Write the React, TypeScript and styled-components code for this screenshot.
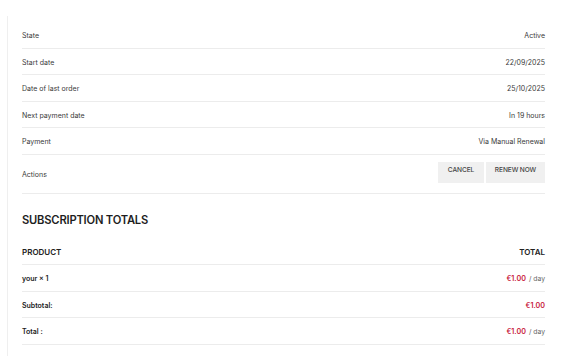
import React from 'react';
import styled, { createGlobalStyle } from 'styled-components';

const GlobalStyle = createGlobalStyle`
  html, body {
    margin: 0;
    padding: 0;
    background: #ffffff;
  }
  body {
    font-family: Inter, "Noto Sans", "Liberation Sans", sans-serif;
    color: #2b2b2b;
  }
`;

const Page = styled.div`
  width: 564px;
  height: 356px;
  box-sizing: border-box;
  padding: 16px 0 0 7px;
  overflow: hidden;
`;

const Panel = styled.div`
  border-left: 1px solid #efefef;
  height: 100%;
  box-sizing: border-box;
  padding: 6px 19px 0 14px;
`;

const Table = styled.div`
  display: flex;
  flex-direction: column;
`;

const Row = styled.div<{ $tall?: boolean }>`
  display: flex;
  align-items: center;
  justify-content: space-between;
  box-sizing: border-box;
  height: ${(p) => (p.$tall ? '39px' : '26.5px')};
  padding-top: 2px;
  border-bottom: 1px solid #ececec;
  font-size: 7px;
  color: #3a3a3a;
`;

const Label = styled.span<{ $strong?: boolean }>`
  font-weight: ${(p) => (p.$strong ? 600 : 400)};
  color: ${(p) => (p.$strong ? '#222' : '#3a3a3a')};
`;

const Value = styled.span`
  color: #3a3a3a;
`;

const Buttons = styled.div`
  display: flex;
  gap: 2px;
  align-self: flex-start;
  margin-top: 5px;
`;

const Button = styled.button<{ $w: number }>`
  width: ${(p) => p.$w}px;
  height: 21px;
  border: none;
  background: #f0f0f0;
  color: #444;
  font-family: inherit;
  font-size: 6.6px;
  font-weight: 500;
  text-transform: uppercase;
  padding: 4px 0 0;
  display: flex;
  justify-content: center;
  align-items: flex-start;
  letter-spacing: -0.1px;
`;

const Heading = styled.h2`
  margin: 0;
  padding: 19px 0 12px;
  line-height: 14px;
  font-size: 11.2px;
  font-weight: 600;
  color: #1e1e1e;
  letter-spacing: -0.2px;
`;

const HeadRow = styled(Row)`
  font-size: 8px;
  font-weight: 600;
  color: #222;
`;

const Price = styled.span`
  display: flex;
  align-items: baseline;
  gap: 3px;
`;

const Amount = styled.span`
  color: #c8203c;
  font-weight: 600;
  font-size: 7.2px;
`;

const Period = styled.span`
  color: #666;
  font-size: 6.8px;
`;

const details: [string, string][] = [
  ['State', 'Active'],
  ['Start date', '22/09/2025'],
  ['Date of last order', '25/10/2025'],
  ['Next payment date', 'In 19 hours'],
  ['Payment', 'Via Manual Renewal'],
];

const totals: { label: string; amount: string; perDay: boolean }[] = [
  { label: 'your × 1', amount: '€1.00', perDay: true },
  { label: 'Subtotal:', amount: '€1.00', perDay: false },
  { label: 'Total :', amount: '€1.00', perDay: true },
];

export default function App() {
  return (
    <Page>
      <GlobalStyle />
      <Panel>
        <Table>
          {details.map(([k, v]) => (
            <Row key={k}>
              <Label>{k}</Label>
              <Value>{v}</Value>
            </Row>
          ))}
          <Row $tall>
            <Label>Actions</Label>
            <Buttons>
              <Button $w={46}>Cancel</Button>
              <Button $w={59}>Renew now</Button>
            </Buttons>
          </Row>
        </Table>
        <Heading>SUBSCRIPTION TOTALS</Heading>
        <Table>
          <HeadRow>
            <span>PRODUCT</span>
            <span>TOTAL</span>
          </HeadRow>
          {totals.map((t) => (
            <Row key={t.label}>
              <Label $strong>{t.label}</Label>
              <Price>
                <Amount>{t.amount}</Amount>
                {t.perDay && <Period>/ day</Period>}
              </Price>
            </Row>
          ))}
        </Table>
      </Panel>
    </Page>
  );
}
